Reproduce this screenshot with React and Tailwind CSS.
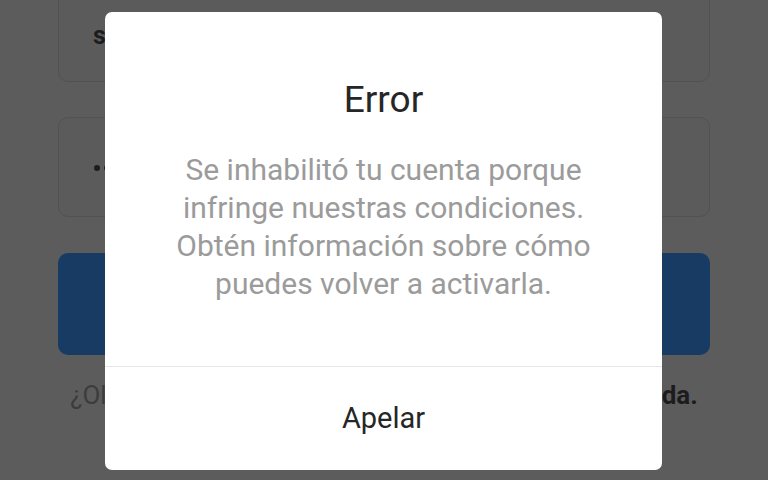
import React from 'react';

export default function App() {
    const dots = [0, 1, 2, 3, 4, 5, 6, 7];

    return (
        <div className="relative w-[768px] h-[480px] overflow-hidden bg-[#5c5c5c] font-['Roboto','Liberation_Sans',sans-serif]">
            {/* login form behind the dimmed overlay */}
            <div className="flex flex-col px-[58px] -mt-[18px]">
                <div className="h-[100px] rounded-[10px] border border-[#525252] bg-[#5b5b5b] flex items-center pl-[34px] pt-[8px]">
                    <span className="text-[25px] font-bold text-[#1c1c1c]">sofia.m</span>
                </div>
                <div className="mt-[35px] h-[100px] rounded-[10px] border border-[#525252] bg-[#5b5b5b] flex items-center gap-[4px] pl-[35px] pt-[2px]">
                    {dots.map((d) => (
                        <span key={d} className="w-[6px] h-[6px] rounded-full bg-[#1c1c1c]"></span>
                    ))}
                </div>
                <div className="mt-[36px] h-[102px] rounded-[10px] bg-[#183b64]"></div>
                <p className="mt-[22px] text-center whitespace-nowrap text-[26px] leading-[36px] text-[#3c3c3c]">
                    ¿Olvidaste tus datos de inicio de sesión? <span className="font-bold text-[#1c1c1c]">Obtén ayuda.</span>
                </p>
            </div>

            {/* dialog */}
            <div className="absolute left-[105px] top-[12px] w-[557px] h-[458px] bg-white rounded-[7px] flex flex-col">
                <div className="flex-1 flex flex-col items-center pt-[66px]">
                    <h2 className="text-[37px] leading-[44px] text-[#262626]">Error</h2>
                    <p className="mt-[29px] text-center text-[30px] leading-[38px] text-[#9b9b9b]">
                        Se inhabilitó tu cuenta porque<br/>
                        infringe nuestras condiciones.<br/>
                        Obtén información sobre cómo<br/>
                        puedes volver a activarla.
                    </p>
                </div>
                <div className="h-[104px] border-t border-[#e6e6e6] flex items-center justify-center">
                    <button className="text-[29px] text-[#262626]">Apelar</button>
                </div>
            </div>
        </div>
    );
}
